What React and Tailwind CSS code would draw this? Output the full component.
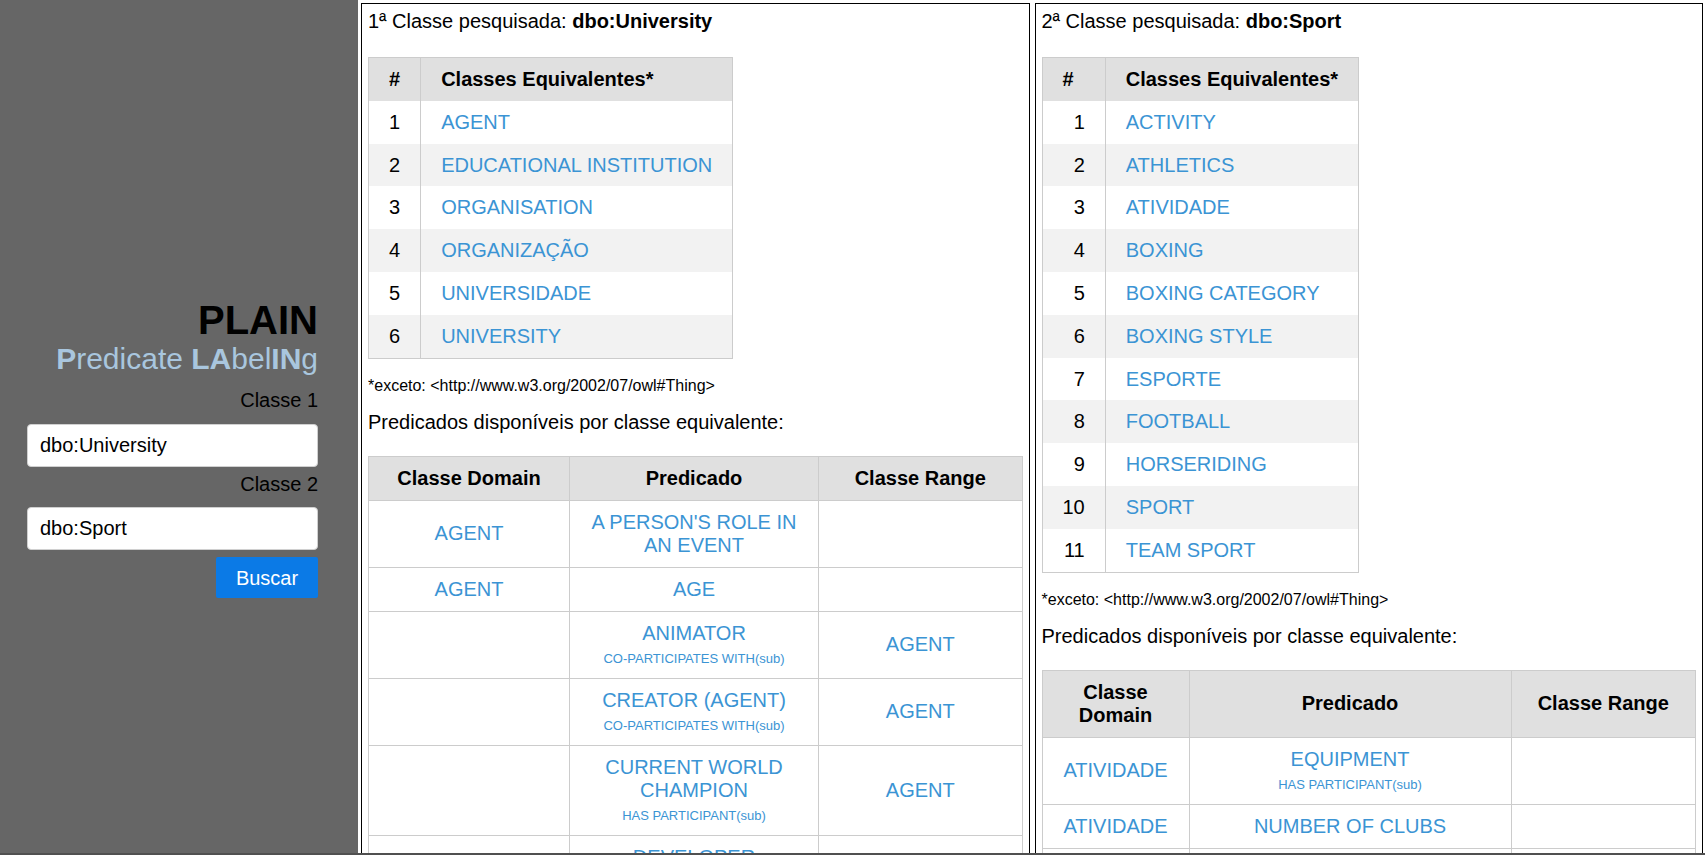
import { Fragment } from 'react'

const LINK = 'text-[#3b94d4]'

const panels = [
  {
    ord: '1ª',
    name: 'dbo:University',
    classes: ['AGENT', 'EDUCATIONAL INSTITUTION', 'ORGANISATION', 'ORGANIZAÇÃO', 'UNIVERSIDADE', 'UNIVERSITY'],
    cols: ['w-[201px]', 'w-[249px]'],
    preds: [
      { domain: 'AGENT', pred: "A PERSON'S ROLE IN AN EVENT", sub: '', range: '' },
      { domain: 'AGENT', pred: 'AGE', sub: '', range: '' },
      { domain: '', pred: 'ANIMATOR', sub: 'CO-PARTICIPATES WITH(sub)', range: 'AGENT' },
      { domain: '', pred: 'CREATOR (AGENT)', sub: 'CO-PARTICIPATES WITH(sub)', range: 'AGENT' },
      { domain: '', pred: 'CURRENT WORLD CHAMPION', sub: 'HAS PARTICIPANT(sub)', range: 'AGENT' },
      { domain: '', pred: 'DEVELOPER', sub: '', range: '' },
    ],
  },
  {
    ord: '2ª',
    name: 'dbo:Sport',
    classes: ['ACTIVITY', 'ATHLETICS', 'ATIVIDADE', 'BOXING', 'BOXING CATEGORY', 'BOXING STYLE', 'ESPORTE', 'FOOTBALL', 'HORSERIDING', 'SPORT', 'TEAM SPORT'],
    cols: ['w-[147px]', 'w-[322px]'],
    preds: [
      { domain: 'ATIVIDADE', pred: 'EQUIPMENT', sub: 'HAS PARTICIPANT(sub)', range: '' },
      { domain: 'ATIVIDADE', pred: 'NUMBER OF CLUBS', sub: '', range: '' },
      { domain: '', pred: '', sub: '', range: '' },
    ],
  },
]

function Panel({ p }) {
  return (
    <div className="flex-1 min-w-0 border border-b-0 border-black px-[6px] pt-[6px]">
      <p className="text-[20px] leading-[23px] text-black">
        {p.ord} Classe pesquisada: <b>{p.name}</b>
      </p>

      <table className="mt-[24px] border border-[#ccc] text-[20px] leading-[22.8px]">
        <thead>
          <tr className="bg-[#e0e0e0]">
            <th className="px-5 py-[10px] text-left font-bold border-r border-[#ccc]">#</th>
            <th className="px-5 py-[10px] text-left font-bold">Classes Equivalentes*</th>
          </tr>
        </thead>
        <tbody>
          {p.classes.map((c, i) => (
            <tr key={c} className={i % 2 === 1 ? 'bg-[#f2f2f2]' : 'bg-white'}>
              <td className="px-5 py-[10px] text-right border-r border-[#ccc]">{i + 1}</td>
              <td className={`px-5 py-[10px] ${LINK}`}>{c}</td>
            </tr>
          ))}
        </tbody>
      </table>

      <p className="mt-[18px] text-[16px] leading-[18px]">*exceto: &lt;http://www.w3.org/2002/07/owl#Thing&gt;</p>
      <p className="mt-[16px] text-[20px] leading-[23px]">Predicados disponíveis por classe equivalente:</p>

      <table className="mt-[22px] w-full table-fixed border border-[#ccc] text-[20px] leading-[23px] text-center">
        <thead>
          <tr className="bg-[#e0e0e0]">
            <th className={`${p.cols[0]} border border-[#ccc] px-[10px] py-[10px] font-bold`}>Classe Domain</th>
            <th className={`${p.cols[1]} border border-[#ccc] px-[10px] py-[10px] font-bold`}>Predicado</th>
            <th className="border border-[#ccc] px-[10px] py-[10px] font-bold">Classe Range</th>
          </tr>
        </thead>
        <tbody>
          {p.preds.map((r, i) => (
            <tr key={i} className="bg-white">
              <td className={`border border-[#ccc] px-[10px] py-[10px] align-middle ${LINK}`}>{r.domain}</td>
              <td className={`border border-[#ccc] px-[10px] py-[10px] align-middle ${LINK}`}>
                <div>{r.pred || '\u00a0'}</div>
                {r.sub && (
                  <div className="h-[23px]">
                    <span className="text-[13px] leading-[13px]">{r.sub}</span>
                  </div>
                )}
              </td>
              <td className={`border border-[#ccc] px-[10px] py-[10px] align-middle ${LINK}`}>{r.range}</td>
            </tr>
          ))}
        </tbody>
      </table>
    </div>
  )
}

export default function App() {
  return (
    <div className="flex h-[855px] overflow-hidden border-b-2 border-[#505050] bg-white text-black font-['Liberation_Sans',Arial,sans-serif]">
      <aside className="w-[358px] shrink-0 bg-[#666666] pt-[300px] pr-[40px] flex flex-col items-end">
        <h1 className="text-[40px] leading-[40px] font-bold text-black">PLAIN</h1>
        <p className="mt-[4px] text-[30px] leading-[30px] text-[#a9c6de]">
          <b>P</b>redicate <b>LA</b>bel<b>IN</b>g
        </p>
        <label className="mt-[15px] text-[20px] leading-[23px] text-black">Classe 1</label>
        <input
          readOnly
          value="dbo:University"
          className="mt-[12px] w-[291px] h-[43px] rounded-[4px] border border-[#d0d0d0] bg-white pl-[12px] text-[20px] text-black outline-none"
        />
        <label className="mt-[6px] text-[20px] leading-[23px] text-black">Classe 2</label>
        <input
          readOnly
          value="dbo:Sport"
          className="mt-[11px] w-[291px] h-[43px] rounded-[4px] border border-[#d0d0d0] bg-white pl-[12px] text-[20px] text-black outline-none"
        />
        <button className="mt-[7px] w-[102px] h-[41px] rounded-[2px] bg-[#0b7ae6] text-[20px] text-white">Buscar</button>
      </aside>

      <main className="flex flex-1 min-w-0 gap-[5px] pl-[3px] pr-[2px] pt-[3px]">
        {panels.map((p) => (
          <Fragment key={p.name}>
            <Panel p={p} />
          </Fragment>
        ))}
      </main>
    </div>
  )
}
